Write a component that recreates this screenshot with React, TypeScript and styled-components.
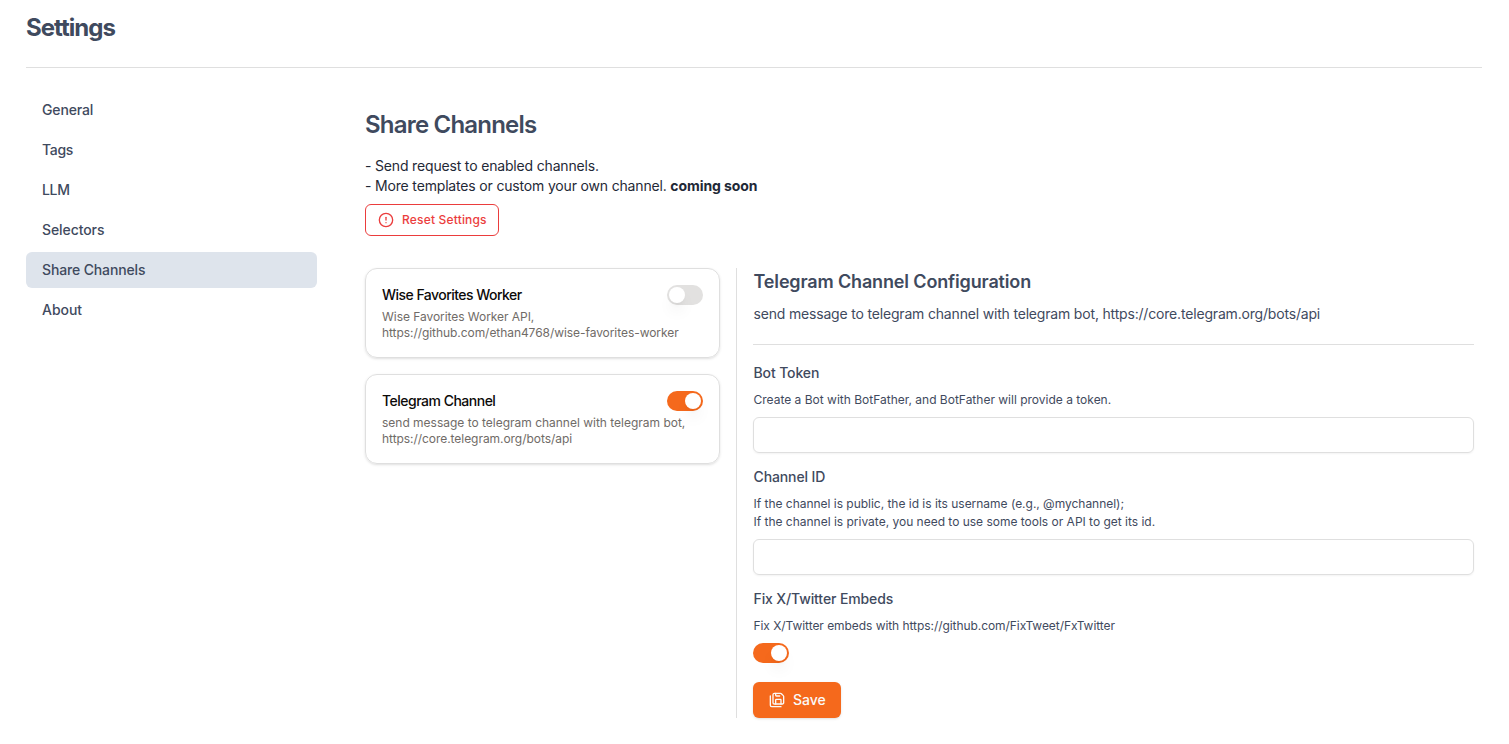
import React, { useState } from "react";
import styled, { createGlobalStyle, css } from "styled-components";
import { CircleAlert, SaveAll } from "lucide-react";

const ink = "#3f4a5e";
const line = "#dfdfdf";
const orange = "#f5691c";
const red = "#eb3d3d";

const GlobalStyle = createGlobalStyle`
  *, *::before, *::after { box-sizing: border-box; }
  body {
    margin: 0;
    background: #fff;
    color: ${ink};
    font-family: Inter, "Liberation Sans", sans-serif;
    font-size: 14px;
    line-height: 20px;
  }
  h1, h2, h3, p { margin: 0; }
  button, input { font: inherit; }
  svg { flex: none; }
`;

const Page = styled.div`
  height: 744px;
  padding: 12px 27px 0 26px;
  overflow: hidden;
`;

const Title = styled.h1`
  font-size: 24px;
  line-height: 32px;
  font-weight: 700;
  letter-spacing: -0.98px;
`;

const Rule = styled.div<{ $top: number }>`
  height: 1px;
  margin-top: ${(p) => p.$top}px;
  background: ${line};
`;

const Body = styled.div`
  display: grid;
  grid-template-columns: 291px 1109px;
  column-gap: 48px;
  padding-top: 24px;
`;

const Nav = styled.nav`
  display: flex;
  flex-direction: column;
  gap: 4px;
`;

const NavItem = styled.a<{ $active?: boolean; $track: number }>`
  height: 36px;
  padding: 8px 16px;
  border-radius: 6px;
  font-weight: 500;
  letter-spacing: ${(p) => p.$track}px;
  cursor: pointer;
  ${(p) => p.$active && css`background: #dee4ec;`}
`;

const Main = styled.main`
  padding-top: 15px;
`;

const Heading = styled.h2`
  font-size: 24px;
  line-height: 36px;
  font-weight: 600;
  letter-spacing: -0.8px;
`;

const Intro = styled.p`
  color: #1f2937;
  letter-spacing: -0.17px;

  strong { letter-spacing: -0.08px; }
`;

const IntroBlock = styled.div`
  margin-top: 13px;
`;

const ResetButton = styled.button`
  display: flex;
  align-items: center;
  gap: 8px;
  width: 134px;
  height: 32px;
  margin-top: 8px;
  padding: 0 12px;
  border: 1px solid ${red};
  border-radius: 6px;
  background: #fff;
  color: ${red};
  font-size: 12px;
  font-weight: 500;
  letter-spacing: 0.18px;
  white-space: nowrap;
`;

const Columns = styled.div`
  display: grid;
  grid-template-columns: 355px 1px 721px;
  column-gap: 16px;
  height: 450px;
  margin-top: 32px;
`;

const CardList = styled.div`
  display: flex;
  flex-direction: column;
  gap: 16px;
`;

const Card = styled.article`
  height: 90px;
  padding: 16px;
  border: 1px solid ${line};
  border-radius: 12px;
  box-shadow: 0 1px 3px rgba(0, 0, 0, 0.1), 0 1px 2px -1px rgba(0, 0, 0, 0.1);
`;

const CardTop = styled.div`
  display: flex;
  align-items: center;
  justify-content: space-between;
`;

const CardTitle = styled.h3<{ $track: number }>`
  color: #0c0a09;
  font-size: 14px;
  line-height: 20px;
  font-weight: 500;
  letter-spacing: ${(p) => p.$track}px;
`;

const CardText = styled.p<{ $track: number }>`
  color: #706b67;
  font-size: 12px;
  line-height: 16px;
  letter-spacing: ${(p) => p.$track}px;
  white-space: nowrap;
`;

const CardBody = styled.div`
  margin-top: 4px;
`;

const Track = styled.button<{ $on: boolean }>`
  display: flex;
  flex: none;
  width: 36px;
  height: 20px;
  padding: 2px;
  border: 0;
  border-radius: 10px;
  background: ${(p) => (p.$on ? orange : "#e2e1e0")};
  justify-content: ${(p) => (p.$on ? "flex-end" : "flex-start")};
`;

const Thumb = styled.span`
  width: 16px;
  height: 16px;
  border-radius: 50%;
  background: #fff;
  box-shadow: 0 10px 15px -3px rgba(0, 0, 0, 0.1), 0 4px 6px -4px rgba(0, 0, 0, 0.1);
`;

const Divider = styled.div`
  background: ${line};
`;

const ConfigTitle = styled.h3`
  padding-left: 0.5px;
  font-size: 18px;
  line-height: 28px;
  font-weight: 600;
  letter-spacing: -0.15px;
`;

const ConfigText = styled.p`
  margin-top: 8px;
  padding-left: 0.5px;
  letter-spacing: -0.18px;
`;

const Field = styled.div<{ $top: number }>`
  margin-top: ${(p) => p.$top}px;
`;

const Label = styled.div`
  padding-left: 0.5px;
  font-weight: 500;
  line-height: 20px;
  letter-spacing: -0.12px;
`;

const HelpBlock = styled.div`
  margin: 8px 0;
  padding-left: 0.5px;
`;

const Help = styled.p<{ $track: number }>`
  font-size: 12px;
  line-height: 18px;
  letter-spacing: ${(p) => p.$track}px;
`;

const Input = styled.input`
  display: block;
  width: 100%;
  height: 36px;
  padding: 4px 12px;
  border: 1px solid ${line};
  border-radius: 6px;
  background: transparent;
  box-shadow: 0 1px 2px rgba(0, 0, 0, 0.05);
`;

const SaveButton = styled.button`
  display: flex;
  align-items: center;
  gap: 8px;
  width: 88px;
  height: 36px;
  margin-top: 19px;
  padding: 0 16px;
  border: 0;
  border-radius: 6px;
  background: ${orange};
  color: #fafaf9;
  font-weight: 500;
  letter-spacing: -0.05px;
  box-shadow: 0 1px 3px rgba(0, 0, 0, 0.1), 0 1px 2px -1px rgba(0, 0, 0, 0.1);
`;

const sections = [
  { name: "General", track: -0.15 },
  { name: "Tags", track: -0.3 },
  { name: "LLM", track: -0.3 },
  { name: "Selectors", track: -0.08 },
  { name: "Share Channels", track: -0.14 },
  { name: "About", track: -0.05 },
];

const channels = [
  {
    name: "Wise Favorites Worker",
    track: -0.53,
    on: false,
    text: [
      { value: "Wise Favorites Worker API,", track: -0.05 },
      { value: "https://github.com/ethan4768/wise-favorites-worker", track: -0.06 },
    ],
  },
  {
    name: "Telegram Channel",
    track: -0.5,
    on: true,
    text: [
      { value: "send message to telegram channel with telegram bot,", track: -0.01 },
      { value: "https://core.telegram.org/bots/api", track: -0.05 },
    ],
  },
];

function Toggle({ initial, label }: { initial: boolean; label: string }) {
  const [on, setOn] = useState(initial);
  return (
    <Track $on={on} role="switch" aria-checked={on} aria-label={label} onClick={() => setOn(!on)}>
      <Thumb />
    </Track>
  );
}

export default function App() {
  return (
    <Page>
      <GlobalStyle />
      <Title>Settings</Title>
      <Rule $top={23} />
      <Body>
        <Nav>
          {sections.map((s) => (
            <NavItem key={s.name} $track={s.track} $active={s.name === "Share Channels"}>
              {s.name}
            </NavItem>
          ))}
        </Nav>
        <Main>
          <Heading>Share Channels</Heading>
          <IntroBlock>
            <Intro>- Send request to enabled channels.</Intro>
            <Intro>
              - More templates or custom your own channel. <strong>coming soon</strong>
            </Intro>
          </IntroBlock>
          <ResetButton>
            <CircleAlert size={16} strokeWidth={2} />
            Reset Settings
          </ResetButton>
          <Columns>
            <CardList>
              {channels.map((c) => (
                <Card key={c.name}>
                  <CardTop>
                    <CardTitle $track={c.track}>{c.name}</CardTitle>
                    <Toggle initial={c.on} label={c.name} />
                  </CardTop>
                  <CardBody>
                    {c.text.map((t) => (
                      <CardText key={t.value} $track={t.track}>{t.value}</CardText>
                    ))}
                  </CardBody>
                </Card>
              ))}
            </CardList>
            <Divider />
            <div>
              <ConfigTitle>Telegram Channel Configuration</ConfigTitle>
              <ConfigText>
                send message to telegram channel with telegram bot, https://core.telegram.org/bots/api
              </ConfigText>
              <Rule $top={20} />
              <Field $top={18}>
                <Label>Bot Token</Label>
                <HelpBlock>
                  <Help $track={0}>Create a Bot with BotFather, and BotFather will provide a token.</Help>
                </HelpBlock>
                <Input aria-label="Bot Token" />
              </Field>
              <Field $top={14}>
                <Label>Channel ID</Label>
                <HelpBlock>
                  <Help $track={-0.02}>If the channel is public, the id is its username (e.g., @mychannel);</Help>
                  <Help $track={-0.01}>If the channel is private, you need to use some tools or API to get its id.</Help>
                </HelpBlock>
                <Input aria-label="Channel ID" />
              </Field>
              <Field $top={14}>
                <Label>Fix X/Twitter Embeds</Label>
                <HelpBlock>
                  <Help $track={-0.06}>Fix X/Twitter embeds with https://github.com/FixTweet/FxTwitter</Help>
                </HelpBlock>
                <Toggle initial label="Fix X/Twitter Embeds" />
              </Field>
              <SaveButton>
                <SaveAll size={16} strokeWidth={2} />
                Save
              </SaveButton>
            </div>
          </Columns>
        </Main>
      </Body>
    </Page>
  );
}
